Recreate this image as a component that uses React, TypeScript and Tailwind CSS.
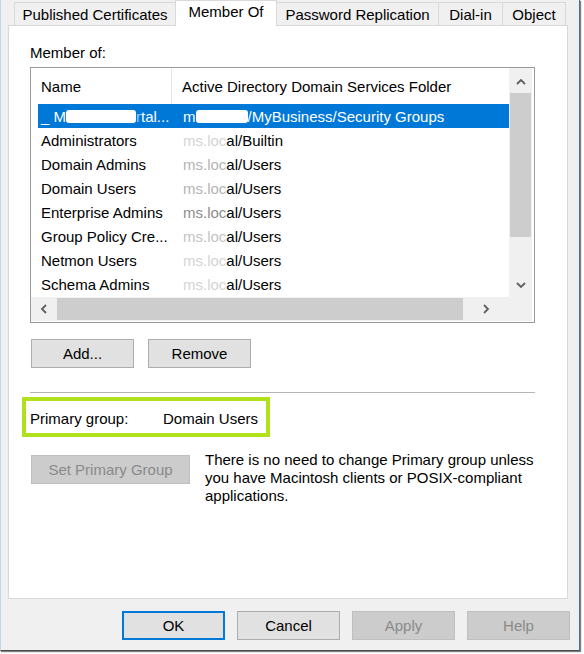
import React from "react";

type Row = { name: string; pre: string; preCls: string; post: string };

const ROWS: Row[] = [
  { name: "Administrators", pre: "ms.loc", preCls: "text-[#d4d4d4]", post: "al/Builtin" },
  { name: "Domain Admins", pre: "ms.loc", preCls: "text-[#b4b4b4]", post: "al/Users" },
  { name: "Domain Users", pre: "ms.loc", preCls: "text-[#b4b4b4]", post: "al/Users" },
  { name: "Enterprise Admins", pre: "ms.loc", preCls: "text-[#8c8c8c]", post: "al/Users" },
  { name: "Group Policy Cre...", pre: "ms.loc", preCls: "text-[#c4c4c4]", post: "al/Users" },
  { name: "Netmon Users", pre: "ms.loc", preCls: "text-[#d4d4d4]", post: "al/Users" },
  { name: "Schema Admins", pre: "ms.loc", preCls: "text-[#d4d4d4]", post: "al/Users" },
];

const TABS = [
  { label: "Published Certificates", w: "w-[162px]" },
  { label: "Member Of", w: "w-[102px]", active: true },
  { label: "Password Replication", w: "w-[163px]" },
  { label: "Dial-in", w: "w-[65px]" },
  { label: "Object", w: "w-[64px]" },
];

function Chevron({ dir }: { dir: "up" | "down" | "left" | "right" }) {
  const d = {
    up: "M1 6 L5 2 L9 6",
    down: "M1 2 L5 6 L9 2",
    left: "M6 1 L2 5 L6 9",
    right: "M2 1 L6 5 L2 9",
  }[dir];
  const vert = dir === "up" || dir === "down";
  return (
    <svg width={vert ? 10 : 8} height={vert ? 8 : 10} viewBox={vert ? "0 0 10 8" : "0 0 8 10"}>
      <path d={d} fill="none" stroke="#606060" strokeWidth="1.8" />
    </svg>
  );
}

function Btn({ children, disabled, def, w = "w-[103px]" }: { children: React.ReactNode; disabled?: boolean; def?: boolean; w?: string }) {
  return (
    <div
      className={`${w} h-[29px] flex items-center justify-center ${
        disabled
          ? "bg-[#cccccc] border border-[#bfbfbf] text-[#8a8a8a]"
          : def
          ? "bg-[#e1e1e1] border-2 border-[#0078d7]"
          : "bg-[#e1e1e1] border border-[#adadad]"
      }`}
    >
      {children}
    </div>
  );
}

export default function App() {
  return (
    <div className="w-[584px] h-[654px] bg-white font-['Liberation_Sans',Arial,sans-serif] text-[15px] leading-[17px] text-black">
      <div className="w-[580px] h-[651px] bg-[#f0f0f0] border-l border-l-[#c5d5e6] border-r border-r-[#3c74b4] border-b border-b-[#4a4a4a] shadow-[1px_1px_1px_rgba(0,0,0,0.5)] flex flex-col">
        {/* Tabs */}
        <div className="h-[26px] flex items-end pl-[13px]">
          {TABS.map((t, i) =>
            t.active ? (
              <div
                key={t.label}
                className={`${t.w} h-[26px] -ml-px relative z-10 bg-white border-t border-l border-r border-[#d9d9d9] flex justify-center pt-[2px]`}
              >
                {t.label}
              </div>
            ) : (
              <div
                key={t.label}
                className={`${t.w} h-[24px] ${i > 0 ? "-ml-px" : ""} bg-[#f0f0f0] border-t border-l border-r border-[#d9d9d9] flex justify-center pt-[3px]`}
              >
                {t.label}
              </div>
            )
          )}
        </div>

        {/* Panel */}
        <div className="ml-[7px] mt-[-1px] w-[560px] h-[574px] bg-white border border-[#d9d9d9] pl-[21px]">
          <div className="mt-[18px]">Member of:</div>

          {/* List */}
          <div className="mt-[6px] w-[505px] h-[256px] border border-[#9a9a9a] flex flex-col">
            <div className="flex h-[229px]">
              <div className="flex-1">
                <div className="h-[36px] flex pl-[10px]">
                  <div className="w-[131px] border-r border-[#e5e5e5] pt-[10px]">Name</div>
                  <div className="pl-[10px] pt-[10px]">Active Directory Domain Services Folder</div>
                </div>
                <div className="h-[24px] ml-[7px] w-[471px] flex items-center bg-[#0078d7] text-white whitespace-nowrap">
                  <div className="w-[145px] pl-[3px] flex items-center">
                    _ M<span className="inline-block w-[70px] h-[13px] bg-white rounded-[3px]" />
                    <span className="text-[#9cc8ee]">r</span>tal...
                  </div>
                  <div className="flex items-center">
                    m<span className="inline-block w-[52px] h-[13px] bg-white rounded-[3px]" />
                    /MyBusiness/Security Groups
                  </div>
                </div>
                {ROWS.map((r) => (
                  <div key={r.name} className="h-[24px] ml-[7px] w-[471px] flex items-center whitespace-nowrap">
                    <div className="w-[145px] pl-[3px]">{r.name}</div>
                    <div>
                      <span className={r.preCls}>{r.pre}</span>
                      {r.post}
                    </div>
                  </div>
                ))}
              </div>
              {/* vertical scrollbar */}
              <div className="w-[23px] mr-[2px] bg-[#f0f0f0] flex flex-col">
                <div className="h-[25px] flex items-center justify-center pt-[3px]">
                  <Chevron dir="up" />
                </div>
                <div className="flex-1 px-px">
                  <div className="h-[144px] bg-[#cdcdcd]" />
                </div>
                <div className="h-[25px] flex items-center justify-center">
                  <Chevron dir="down" />
                </div>
              </div>
            </div>
            {/* horizontal scrollbar */}
            <div className="flex h-[24px]">
              <div className="flex-1 bg-[#f0f0f0] flex items-center">
                <div className="w-[26px] flex justify-center">
                  <Chevron dir="left" />
                </div>
                <div className="w-[406px] h-[22px] bg-[#cdcdcd]" />
                <div className="flex-1 flex justify-center">
                  <Chevron dir="right" />
                </div>
              </div>
              <div className="w-[23px] mr-[2px] bg-[#f0f0f0]" />
            </div>
          </div>

          {/* Add / Remove */}
          <div className="mt-[16px] ml-px flex gap-[14px]">
            <Btn>Add...</Btn>
            <Btn>Remove</Btn>
          </div>

          <div className="mt-[24px] w-[505px] border-t border-[#b4b4b4]" />

          {/* Primary group highlight */}
          <div className="mt-[4px] ml-[-8px] w-[248px] h-[40px] border-4 border-[#b1e01c] flex items-center pl-[4px] pt-[2px]">
            <div className="w-[133px]">Primary group:</div>
            <div>Domain Users</div>
          </div>

          <div className="mt-[18px] ml-px flex items-start">
            <Btn disabled w="w-[159px]">
              Set Primary Group
            </Btn>
            <div className="ml-[15px] mt-[-4px] leading-[18px] whitespace-nowrap">
              <div>There is no need to change Primary group unless</div>
              <div>you have Macintosh clients or POSIX-compliant</div>
              <div>applications.</div>
            </div>
          </div>
        </div>

        {/* Dialog buttons */}
        <div className="mt-[12px] ml-[121px] flex gap-3">
          <Btn def>OK</Btn>
          <Btn>Cancel</Btn>
          <Btn disabled>Apply</Btn>
          <Btn disabled>Help</Btn>
        </div>
      </div>
    </div>
  );
}
